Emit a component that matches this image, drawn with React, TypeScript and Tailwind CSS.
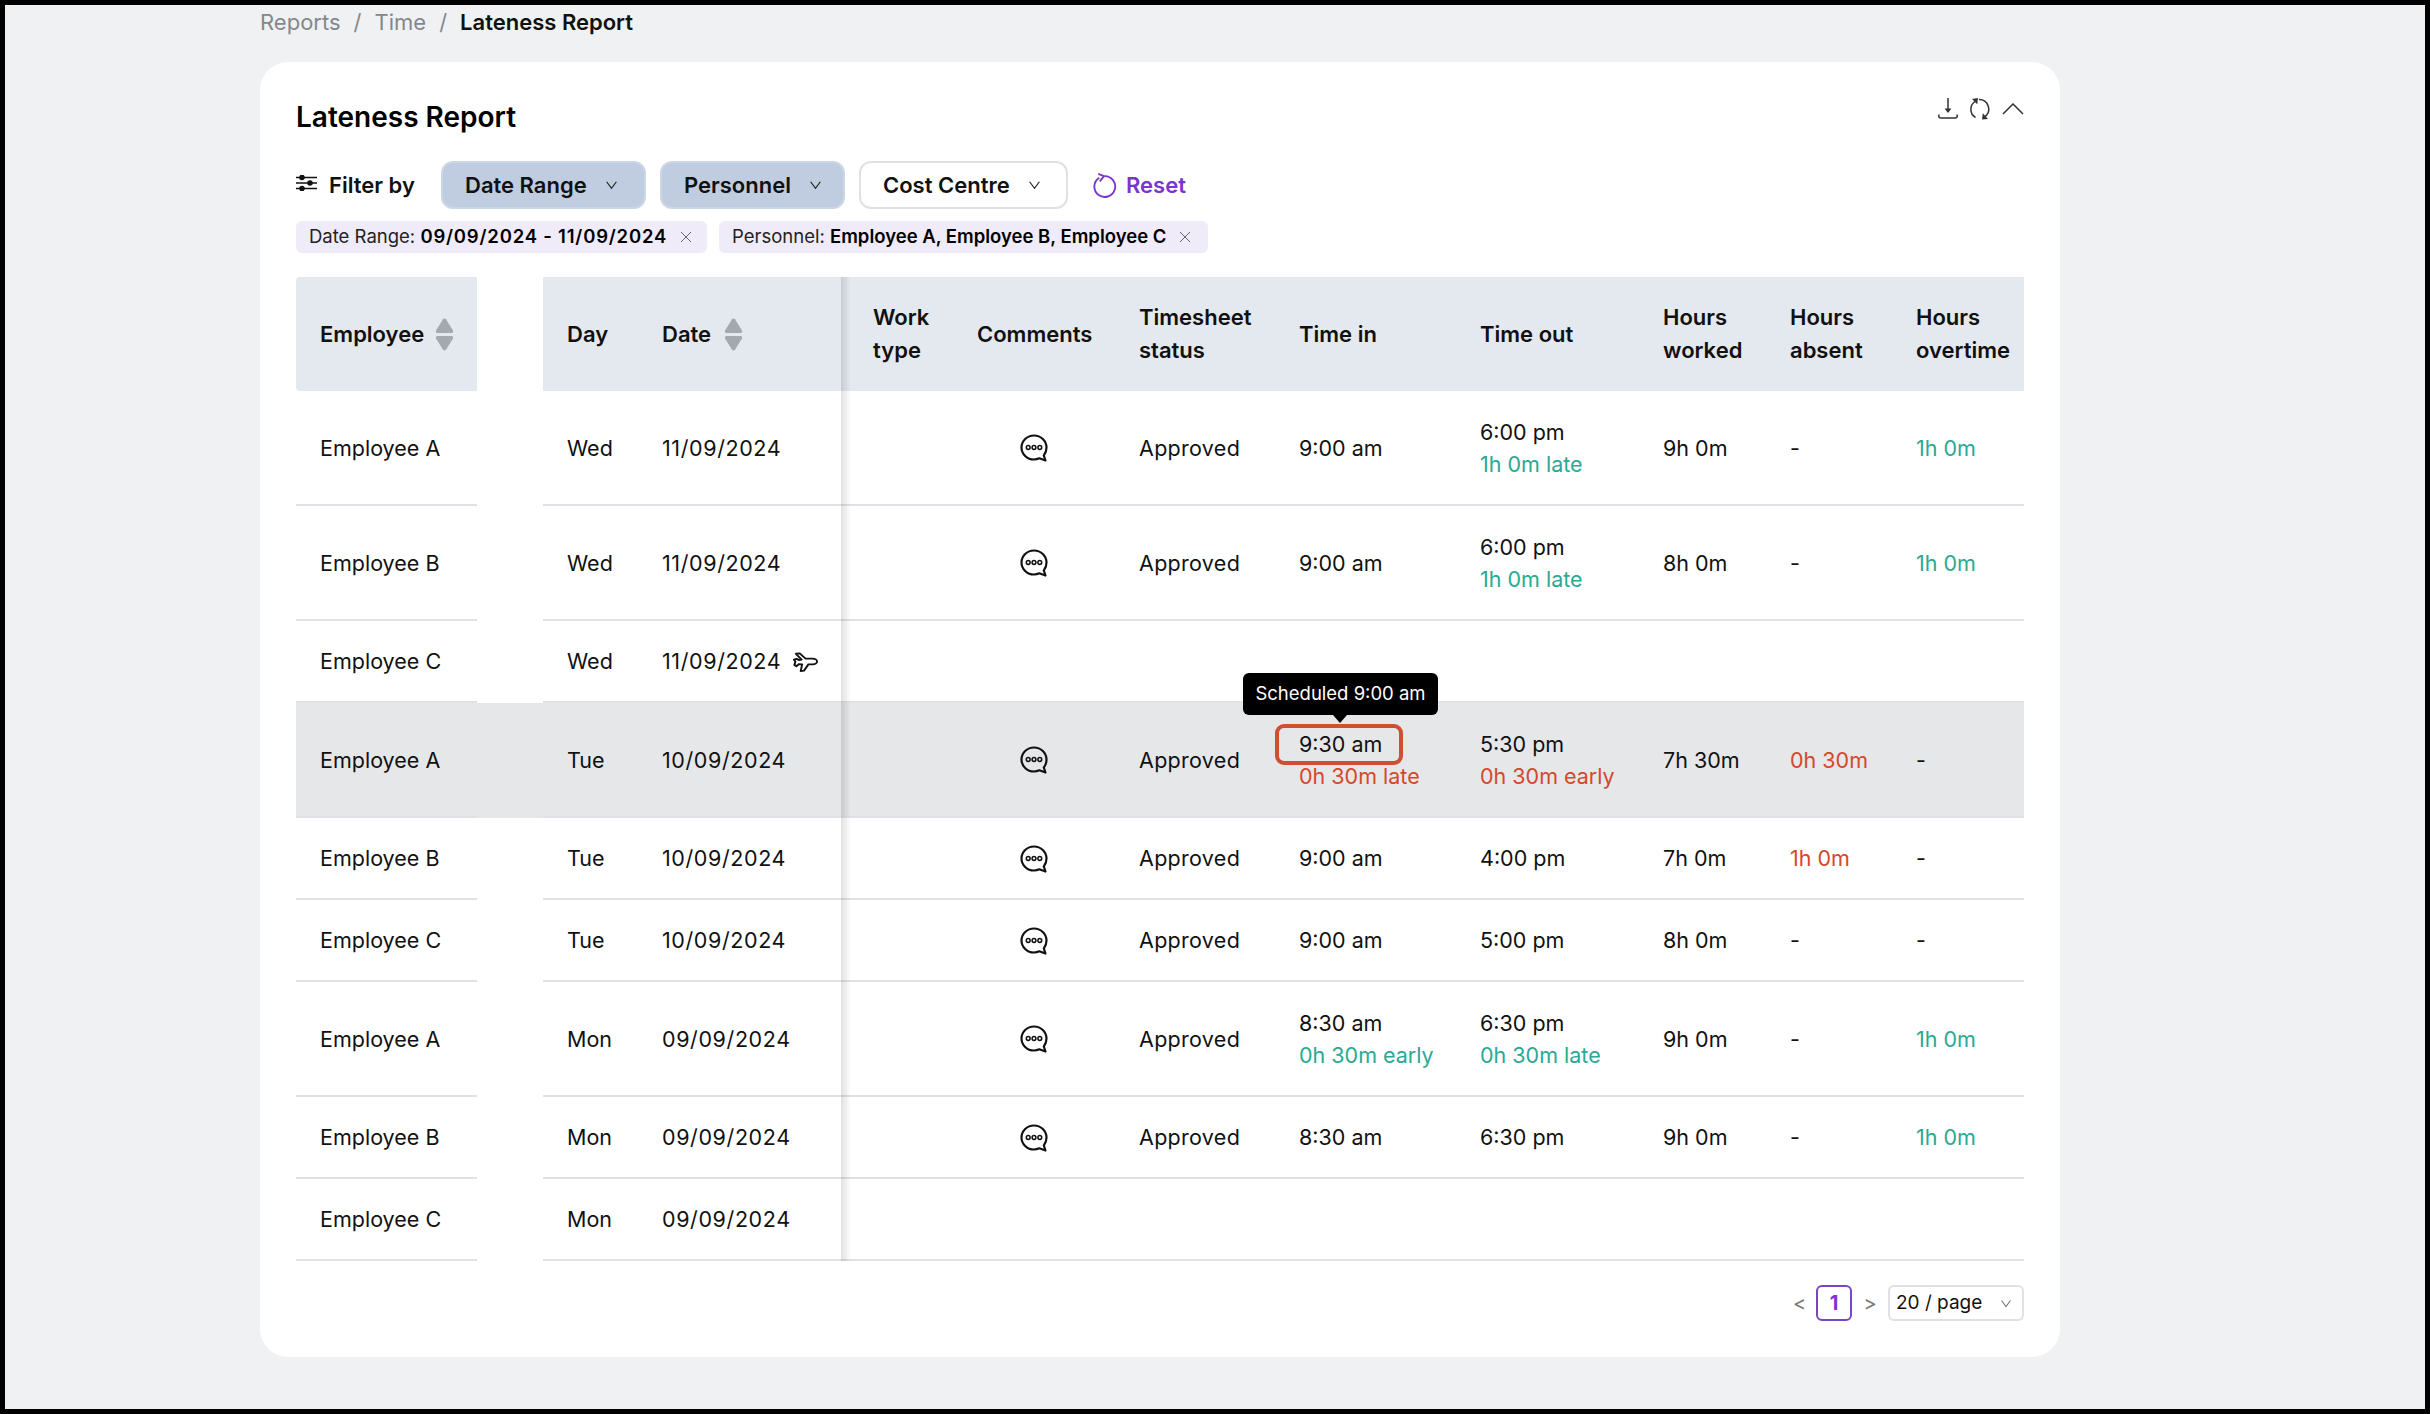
import React from "react";

const GRID = "grid grid-cols-[181px_66px_95px_203px_112px_162px_160px_181px_183px_127px_126px_132px]";
const G = "#2aa994";
const R = "#d5482a";

function Chevron({ className = "" }: { className?: string }) {
  return (
    <svg viewBox="0 0 12 9" className={className} fill="none" stroke="currentColor" strokeWidth="1.1">
      <path d="M1.5 1.5 6 7.500l4.500-6" />
    </svg>
  );
}

function Sort() {
  return (
    <svg viewBox="0 0 19 33" className="w-[19px] h-[33px]" fill="#a5a8ae">
      <path d="M8 1.2c.7-1 2.3-1 3 0l7 11.3c.6 1-.1 2.5-1.4 2.5H2.4C1.100 15 .4 13.500 1 12.500z" />
      <path d="M8 31.800c.7 1 2.300 1 3 0l7-11.300c.6-1-.1-2.500-1.400-2.500H2.400c-1.300 0-2 1.500-1.400 2.500z" />
    </svg>
  );
}

function CommentIcon() {
  return (
    <svg viewBox="0 0 28 28" className="w-[28px] h-[28px]" fill="none" stroke="#111">
      <path strokeWidth="2.200" d="M14 1.500C7.100 1.500 1.500 7 1.500 13.500S7.100 25.500 14 25.500c1.900 0 3.700-.4 5.300-1.200l6.200 2.200-1.700-5c1.700-2.100 2.700-5 2.700-8C26.500 7 20.900 1.500 14 1.500z" strokeLinejoin="round" />
      <circle strokeWidth="1.500" cx="8.200" cy="13.500" r="1.900" />
      <circle strokeWidth="1.500" cx="14" cy="13.500" r="1.900" />
      <circle strokeWidth="1.500" cx="19.800" cy="13.500" r="1.900" />
    </svg>
  );
}

function PlaneIcon() {
  return (
    <svg viewBox="0 0 26 22" className="w-[25px] h-[22px] ml-[12px]" fill="none" stroke="#111" strokeWidth="2" strokeLinejoin="round">
      <path d="M3 2.500 7 2l6 5.500h7.500c2.500 0 4.500 1.500 4.500 3s-2 3-4.500 3H16L11.500 20l-3.500.5 1.500-7-3.500-.2-2.500 2.200L1.500 14l1-3.500-1.500-2 2.800-.8L6.500 9l2.500-.5z" />
    </svg>
  );
}

type Sub = { text: string; color: string } | null;
type Row = {
  emp: string;
  day: string;
  date: string;
  h: string;
  plane?: boolean;
  empty?: boolean;
  inT?: string;
  inSub?: Sub;
  outT?: string;
  outSub?: Sub;
  worked?: string;
  absent?: string;
  absentRed?: boolean;
  over?: string;
  active?: boolean;
};

const rows: Row[] = [
  { emp: "Employee A", day: "Wed", date: "11/09/2024", h: "h-[115px]", inT: "9:00 am", outT: "6:00 pm", outSub: { text: "1h 0m late", color: G }, worked: "9h 0m", absent: "-", over: "1h 0m" },
  { emp: "Employee B", day: "Wed", date: "11/09/2024", h: "h-[115px]", inT: "9:00 am", outT: "6:00 pm", outSub: { text: "1h 0m late", color: G }, worked: "8h 0m", absent: "-", over: "1h 0m" },
  { emp: "Employee C", day: "Wed", date: "11/09/2024", h: "h-[82px]", plane: true, empty: true },
  { emp: "Employee A", day: "Tue", date: "10/09/2024", h: "h-[115px]", active: true, inT: "9:30 am", inSub: { text: "0h 30m late", color: R }, outT: "5:30 pm", outSub: { text: "0h 30m early", color: R }, worked: "7h 30m", absent: "0h 30m", absentRed: true, over: "-" },
  { emp: "Employee B", day: "Tue", date: "10/09/2024", h: "h-[82px]", inT: "9:00 am", outT: "4:00 pm", worked: "7h 0m", absent: "1h 0m", absentRed: true, over: "-" },
  { emp: "Employee C", day: "Tue", date: "10/09/2024", h: "h-[82px]", inT: "9:00 am", outT: "5:00 pm", worked: "8h 0m", absent: "-", over: "-" },
  { emp: "Employee A", day: "Mon", date: "09/09/2024", h: "h-[115px]", inT: "8:30 am", inSub: { text: "0h 30m early", color: G }, outT: "6:30 pm", outSub: { text: "0h 30m late", color: G }, worked: "9h 0m", absent: "-", over: "1h 0m" },
  { emp: "Employee B", day: "Mon", date: "09/09/2024", h: "h-[82px]", inT: "8:30 am", outT: "6:30 pm", worked: "9h 0m", absent: "-", over: "1h 0m" },
  { emp: "Employee C", day: "Mon", date: "09/09/2024", h: "h-[82px]", empty: true },
];

const cell = "flex items-center border-b-2 border-[#e0e1e4] pl-[24px] pt-[1px]";

function Stack({ t, sub }: { t?: string; sub?: Sub }) {
  return (
    <div className="flex flex-col">
      <span>{t}</span>
      {sub && <span style={{ color: sub.color }}>{sub.text}</span>}
    </div>
  );
}

function TableRow({ r }: { r: Row }) {
  return (
    <div className={`${GRID} ${r.h} ${r.active ? "bg-[#e6e7e9]" : ""}`}>
      <div className={cell}>{r.emp}</div>
      <div />
      <div className={cell}>{r.day}</div>
      <div className={cell}>
        <span className="tracking-[0.6px]">{r.date}</span>
        {r.plane && <PlaneIcon />}
      </div>
      <div className={cell} />
      <div className={`${cell} justify-center !pl-0`}>{!r.empty && <CommentIcon />}</div>
      <div className={cell}>{!r.empty && <span className="tracking-[0.3px]">Approved</span>}</div>
      <div className={`${cell} relative`}>
        {!r.empty && <Stack t={r.inT} sub={r.inSub} />}
        {r.active && (
          <>
            <div className="absolute left-0 top-[21px] w-[128px] h-[41px] rounded-[9px] border-[4px] border-[#cf4f33]" />
            <div className="absolute left-[-32px] top-[-30px] w-[195px] h-[42px] z-10 rounded-[6px] bg-black text-white text-[18.500px] flex items-center justify-center whitespace-nowrap">
              Scheduled 9:00 am
              <div className="absolute left-[90px] bottom-[-8px] w-0 h-0 border-x-[7px] border-x-transparent border-t-[8px] border-t-black" />
            </div>
          </>
        )}
      </div>
      <div className={cell}>{!r.empty && <Stack t={r.outT} sub={r.outSub} />}</div>
      <div className={cell}>{r.worked}</div>
      <div className={cell}>
        <span style={r.absentRed ? { color: R } : undefined}>{r.absent}</span>
      </div>
      <div className={cell}>
        <span style={r.over && r.over !== "-" ? { color: G } : undefined}>{r.over}</span>
      </div>
    </div>
  );
}

function Tag({ label, value, className, valueClass = "" }: { label: string; value: string; className: string; valueClass?: string }) {
  return (
    <div className={`h-[32px] rounded-[6px] bg-[#efebf8] flex items-center pl-[13px] text-[18.500px] text-[#222] whitespace-nowrap ${className}`}>
      <span>{label}&nbsp;</span>
      <span className={`font-semibold text-black ${valueClass}`}>{value}</span>
      <svg viewBox="0 0 12 12" className="w-[12px] h-[12px] ml-[13px] text-[#666]" fill="none" stroke="currentColor" strokeWidth="1">
        <path d="M1 1l10 10M11 1 1 11" />
      </svg>
    </div>
  );
}

function FilterBtn({ label, active, className }: { label: string; active?: boolean; className: string }) {
  return (
    <div className={`h-[48px] rounded-[12px] border-2 flex items-center pl-[22px] font-semibold text-[22px] whitespace-nowrap ${active ? "bg-[#c0cde0] border-[#cdd6e4]" : "bg-white border-[#e0e1e4]"} ${className}`}>
      {label}
      <Chevron className="w-[13px] h-[10px] ml-[18px] text-[#222]" />
    </div>
  );
}

function Head({ children, className = "" }: { children?: React.ReactNode; className?: string }) {
  return <div className={`flex items-center pl-[24px] leading-[33px] ${className}`}>{children}</div>;
}

export default function App() {
  return (
    <div className="w-[2430px] h-[1414px] bg-black p-[5px] overflow-hidden font-['Inter','Liberation_Sans',sans-serif] text-[21.500px] text-[#111]">
      <div className="h-full bg-[#f0f1f3] pl-[255px] pr-[365px]">
        <div className="h-[57px] pt-[2px] flex items-start gap-[13px] text-[22px] text-[#85878c] leading-[30px]">
          <span>Reports</span>
          <span>/</span>
          <span>Time</span>
          <span>/</span>
          <span className="font-semibold text-[#111] text-[22px]">Lateness Report</span>
        </div>
        <div className="h-[1295px] rounded-[28px] bg-white px-[36px] relative">
          <div className="h-[99px] flex justify-between pt-[37px]">
            <div className="text-[28px] font-semibold leading-[36px] text-black">Lateness Report</div>
            <div className="flex gap-[11px] mt-[-1px] h-[22px] text-[#333]">
              <svg viewBox="0 0 20 21" className="w-[20px] h-[21px]" fill="none" stroke="currentColor" strokeWidth="1.500">
                <path d="M10 0v14" />
                <path d="M6.500 10.500h7L10 15z" fill="currentColor" stroke="none" />
                <path d="M.8 16.500v1.500c0 1 .7 2 2 2h14.400c1.300 0 2-1 2-2v-1.500" />
              </svg>
              <svg viewBox="0 0 22 22" className="w-[22px] h-[22px]" fill="none" stroke="currentColor" strokeWidth="1.500">
                <path d="M6 3.500A9.500 9.500 0 0 0 6.500 19.500" />
                <path d="M10 1.600a9.500 9.500 0 0 1 6 17" />
                <path d="M3 1l6-1-.8 6.200z" fill="currentColor" stroke="none" />
                <path d="M19 21l-6 .6.800-6.400z" fill="currentColor" stroke="none" />
              </svg>
              <svg viewBox="0 0 22 12" className="w-[22px] h-[12px] mt-[5px]" fill="none" stroke="currentColor" strokeWidth="1.500">
                <path d="M1 11 11 1l10 10" />
              </svg>
            </div>
          </div>
          <div className="flex items-center h-[48px]">
            <svg viewBox="0 0 21 16" className="w-[21px] h-[16px] mr-[12px] mt-[-4px]" fill="none" stroke="#111" strokeWidth="1.600">
              <path d="M0 2.500h21M0 8h21M0 13.500h21" />
              <circle cx="6" cy="2.500" r="2" fill="#111" />
              <circle cx="14" cy="8" r="2" fill="#111" />
              <circle cx="6" cy="13.500" r="2" fill="#111" />
            </svg>
            <span className="font-semibold w-[112px] whitespace-nowrap text-[22px]">Filter by</span>
            <FilterBtn active label="Date Range" className="w-[205px] mr-[14px]" />
            <FilterBtn active label="Personnel" className="w-[185px] mr-[14px]" />
            <FilterBtn label="Cost Centre" className="w-[209px]" />
            <svg viewBox="0 0 24 24" className="w-[25px] h-[25px] ml-[24px]" fill="none" stroke="#7a35d0" strokeWidth="1.800">
              <path d="M7 4.500a10 10 0 1 0 5-1.500" />
              <path d="M6 .8 11.500 3 7.500 8" />
            </svg>
            <span className="ml-[9px] font-semibold text-[#7a35d0] text-[22px]">Reset</span>
          </div>
          <div className="flex gap-[12px] mt-[12px]">
            <Tag label="Date Range:" value="09/09/2024 - 11/09/2024" className="w-[411px]" valueClass="tracking-[0.8px]" />
            <Tag label="Personnel:" value="Employee A, Employee B, Employee C" className="w-[489px]" />
          </div>
          <div className="mt-[24px] relative">
            <div className={`${GRID} h-[114px] font-semibold leading-[33px] text-[22px]`}>
              <Head className="bg-[#e4e8ef] rounded-l-[4px] gap-[11px]">
                Employee <Sort />
              </Head>
              <div />
              <Head className="bg-[#e4e8ef]">Day</Head>
              <Head className="bg-[#e4e8ef] gap-[13px]">
                Date <Sort />
              </Head>
              <Head className="bg-[#e4e8ef] !pl-[32px]">
                <span>Work<br />type</span>
              </Head>
              <Head className="bg-[#e4e8ef]">Comments</Head>
              <Head className="bg-[#e4e8ef]">
                <span>Timesheet<br />status</span>
              </Head>
              <Head className="bg-[#e4e8ef]">Time in</Head>
              <Head className="bg-[#e4e8ef]">Time out</Head>
              <Head className="bg-[#e4e8ef]">
                <span>Hours<br />worked</span>
              </Head>
              <Head className="bg-[#e4e8ef]">
                <span>Hours<br />absent</span>
              </Head>
              <Head className="bg-[#e4e8ef]">
                <span>Hours<br />overtime</span>
              </Head>
            </div>
            {rows.map((r, i) => (
              <TableRow key={i} r={r} />
            ))}
            <div className="absolute left-[545px] top-0 bottom-0 w-[10px] bg-gradient-to-r from-[#0000001f] to-transparent pointer-events-none" />
          </div>
          <div className="flex items-center justify-end mt-[24px] h-[36px]">
            <span className="text-[#777] text-[20px] w-[23px]">&lt;</span>
            <div className="w-[36px] h-[36px] rounded-[6px] border-2 border-[#7a45c2] text-[#7a35d0] font-bold text-[20px] flex items-center justify-center">1</div>
            <span className="text-[#777] text-[20px] w-[36px] text-center">&gt;</span>
            <div className="w-[136px] h-[36px] rounded-[6px] border-2 border-[#e0e1e4] flex items-center justify-between pl-[6px] pr-[10px] text-[19px]">
              20 / page
              <Chevron className="w-[12px] h-[9px] text-[#777]" />
            </div>
          </div>
        </div>
      </div>
    </div>
  );
}
